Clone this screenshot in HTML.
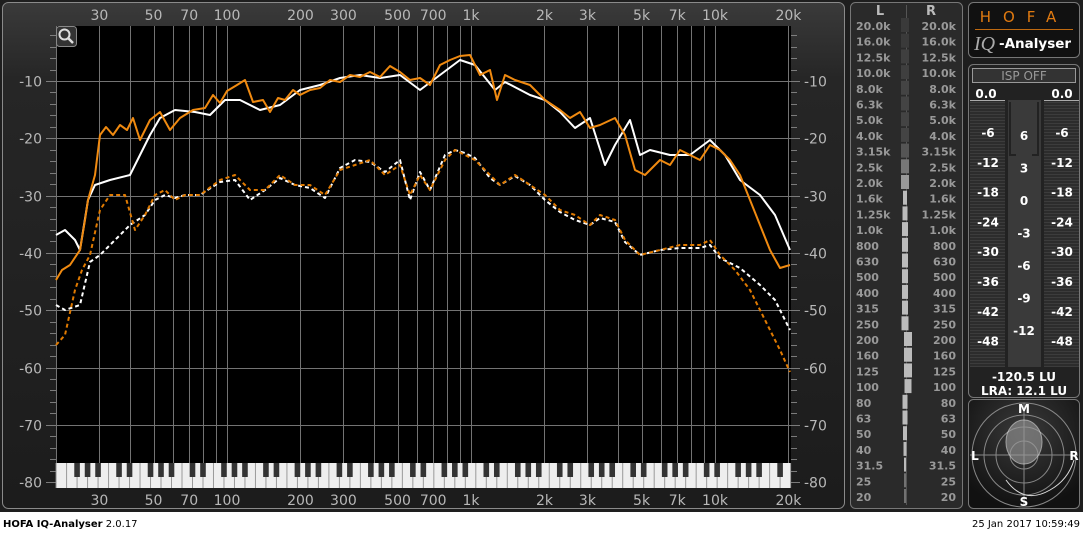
<!DOCTYPE html>
<html><head><meta charset="utf-8"><style>
body{margin:0;width:1083px;height:533px;background:#fff;overflow:hidden;font-family:"DejaVu Sans","Liberation Sans",sans-serif}
svg{position:absolute;left:0;top:0}
</style></head><body>
<svg id="s" width="1083" height="533" xmlns="http://www.w3.org/2000/svg" font-family="DejaVu Sans, Liberation Sans, sans-serif">
<defs>
<linearGradient id="bg" x1="0" y1="0" x2="0" y2="1"><stop offset="0" stop-color="#3a3a3a"/><stop offset="0.15" stop-color="#262626"/><stop offset="1" stop-color="#1c1c1c"/></linearGradient>
<pattern id="str" width="4" height="3" patternUnits="userSpaceOnUse"><rect width="4" height="3" fill="#2c2c2c"/><rect width="4" height="1" fill="#3c3c3c"/></pattern>
<radialGradient id="gn" cx="0.5" cy="0.3" r="0.7"><stop offset="0" stop-color="#3a3a3a"/><stop offset="1" stop-color="#111"/></radialGradient>
</defs>
<rect x="0" y="0" width="1083" height="512" fill="#1e1e1e"/>
<rect x="2.5" y="2.5" width="842" height="506" rx="6" fill="url(#bg)" stroke="#8a8a8a"/>
<rect x="56" y="26" width="735" height="462" fill="#000"/>
<g id="grid" stroke="#9a9a9a" stroke-width="1" opacity="0.75"></g>
<g id="lbl" fill="#b8b8b8" font-size="14"></g>
<g id="keys"></g>
<g fill="none" stroke-width="2" stroke-linejoin="round">
<polyline id="ws" stroke="#fff"/>
<polyline id="os" stroke="#f08a10"/>
<polyline id="wd" stroke="#fff" stroke-dasharray="4 3"/>
<polyline id="od" stroke="#e07a00" stroke-dasharray="4 3"/>
</g>
<rect x="56.5" y="26.5" width="20" height="20" rx="3" fill="#333" stroke="#888"/>
<circle cx="64.5" cy="34.5" r="5" fill="none" stroke="#ddd" stroke-width="2"/>
<line x1="68" y1="38" x2="73" y2="43" stroke="#ddd" stroke-width="2.5"/>
<rect x="850.5" y="2.5" width="112" height="506" rx="5" fill="#2a2a2a" stroke="#777"/>
<line x1="906.5" y1="5" x2="906.5" y2="505" stroke="#555"/>
<text x="880" y="15" fill="#bbb" font-size="13" font-weight="bold" text-anchor="middle">L</text>
<text x="931" y="15" fill="#bbb" font-size="13" font-weight="bold" text-anchor="middle">R</text>
<g id="bands" fill="#999" font-size="11" font-weight="bold"></g>
<rect x="968.5" y="2.5" width="111" height="55" rx="5" fill="#111" stroke="#777"/>
<text x="1024" y="22" fill="#e07a10" font-size="15" text-anchor="middle" letter-spacing="12">HOFA</text>
<line x1="975" y1="29.5" x2="1073" y2="29.5" stroke="#c06a10"/>
<text x="974" y="50" fill="#aaa" font-size="20" font-style="italic" font-family="Liberation Serif,serif">IQ</text>
<text x="999" y="48" fill="#fff" font-size="13.5" font-weight="bold">-Analyser</text>
<rect x="968.5" y="64.5" width="111" height="333" rx="5" fill="#222" stroke="#777"/>
<rect x="972.5" y="68.5" width="103" height="14" fill="#333" stroke="#999"/>
<text x="1024" y="80" fill="#999" font-size="12" text-anchor="middle">ISP OFF</text>
<text x="986" y="98" fill="#fff" font-size="12" font-weight="bold" text-anchor="middle">0.0</text>
<text x="1062" y="98" fill="#fff" font-size="12" font-weight="bold" text-anchor="middle">0.0</text>
<rect x="970" y="100" width="35" height="267" fill="url(#str)"/>
<rect x="1044" y="100" width="35" height="267" fill="url(#str)"/>
<rect x="970" y="100" width="35" height="1" fill="#aaa"/><rect x="1044" y="100" width="35" height="1" fill="#aaa"/>
<rect x="1008" y="100" width="33" height="267" fill="#3a3a3a"/>
<path d="M1010 102 V155 H1016 M1038 102 V155 H1032" stroke="#222" stroke-width="2" fill="none"/>
<g id="msc" fill="#fff" font-size="12" font-weight="bold" text-anchor="middle"></g>
<text x="1024" y="381" fill="#fff" font-size="12" font-weight="bold" text-anchor="middle">-120.5 LU</text>
<text x="1024" y="395" fill="#fff" font-size="12" font-weight="bold" text-anchor="middle">LRA: 12.1 LU</text>
<rect x="968.5" y="399.5" width="111" height="109" rx="5" fill="url(#gn)" stroke="#777"/>
<g fill="none" stroke="#888">
<circle cx="1024" cy="455" r="52"/><circle cx="1024" cy="455" r="40"/><circle cx="1024" cy="455" r="28"/><circle cx="1024" cy="455" r="14"/>
<line x1="970" y1="455" x2="1078" y2="455"/><line x1="1024" y1="403" x2="1024" y2="506"/>
</g>
<ellipse cx="1024" cy="442" rx="18" ry="22" fill="#999" opacity="0.6" stroke="#eee"/>
<path d="M1006 480 Q1024 505 1050 490 Q1068 480 1074 460" fill="none" stroke="#ddd"/>
<text x="1024" y="413" fill="#fff" font-size="12" font-weight="bold" text-anchor="middle">M</text>
<text x="1024" y="506" fill="#fff" font-size="12" font-weight="bold" text-anchor="middle">S</text>
<text x="975" y="460" fill="#fff" font-size="12" font-weight="bold" text-anchor="middle">L</text>
<text x="1074" y="460" fill="#fff" font-size="12" font-weight="bold" text-anchor="middle">R</text>
<text x="3" y="527" fill="#000" font-size="10"><tspan font-weight="bold">HOFA IQ-Analyser</tspan> 2.0.17</text>
<text x="1080" y="527" fill="#000" font-size="10" text-anchor="end">25 Jan 2017 10:59:49</text>
</svg>
<script>
var NS="http://www.w3.org/2000/svg";
function el(p,t,a,txt){var e=document.createElementNS(NS,t);for(var k in a)e.setAttribute(k,a[k]);if(txt!=null)e.textContent=txt;document.getElementById(p).appendChild(e);return e;}
function X(f){return 227+244*Math.log10(f/100);}
function Y(d){return 23.7-5.73*d;}
var fs=[20,30,40,50,60,70,80,90,100,200,300,400,500,600,700,800,900,1000,2000,3000,4000,5000,6000,7000,8000,9000,10000,20000];
fs.forEach(function(f){var x=Math.round(X(f))+0.5;el("grid","line",{x1:x,y1:26,x2:x,y2:463});});
for(var d=-10;d>=-80;d-=10){var y=Math.round(Y(d))+0.5;el("grid","line",{x1:46,y1:y,x2:800,y2:y});
el("lbl","text",{x:42,y:y+5,"text-anchor":"end"},String(d));el("lbl","text",{x:804,y:y+5},String(d));}
for(var d=-2;d>-80;d-=2){if(d%10==0)continue;var y=Math.round(Y(d))+0.5;el("grid","line",{x1:50,y1:y,x2:56,y2:y});el("grid","line",{x1:791,y1:y,x2:797,y2:y});}
var lb={30:"30",50:"50",70:"70",100:"100",200:"200",300:"300",500:"500",700:"700",1000:"1k",2000:"2k",3000:"3k",5000:"5k",7000:"7k",10000:"10k",20000:"20k"};
for(var f in lb){var x=X(+f);el("lbl","text",{x:x,y:20,"text-anchor":"middle"},lb[f]);el("lbl","text",{x:x,y:505,"text-anchor":"middle"},lb[f]);}
el("keys","rect",{x:56,y:463,width:735,height:25,fill:"#eee"});
var oct=244*Math.log10(2),ww=oct/7;
var cx=X(16.35);
for(var i=0;i<80;i++){var x=cx+i*ww;if(x>56&&x<791)el("keys","line",{x1:x,y1:463,x2:x,y2:488,stroke:"#999"});}
for(var o=0;o<12;o++){var b=cx+o*oct;[1,2,4,5,6].forEach(function(k){var x=b+k*ww-2.8;if(x>56&&x<786)el("keys","rect",{x:x,y:463,width:5.6,height:14,fill:"#333"});});}
function pl(id,s){document.getElementById(id).setAttribute("points",s);}
pl("os","56,280 62,270 70,265 80,250 85,220 88,200 95,175 100,135 106,127 113,135 120,125 127,130 133,118 140,140 150,120 160,112 170,130 180,118 193,110 205,108 213,95 220,103 227,91 237,85 245,80 253,102 263,100 270,112 278,98 285,100 293,90 300,95 310,90 320,88 330,80 340,82 350,75 360,77 370,72 380,77 390,66 400,72 410,80 420,78 430,85 440,65 450,60 460,56 470,55 480,75 490,70 497,100 505,75 515,80 530,85 545,100 560,110 570,118 580,112 590,128 600,125 615,118 625,135 635,170 645,175 660,160 670,165 680,150 690,155 700,160 710,145 720,150 730,160 740,175 750,200 760,225 770,250 780,268 790,265");
pl("ws","56,235 65,230 75,240 80,250 88,200 95,185 110,180 130,175 140,155 150,135 160,118 175,110 195,112 210,115 225,100 240,100 260,110 280,105 300,90 320,85 340,78 360,75 380,78 400,75 420,90 440,75 460,60 475,65 495,90 505,82 530,95 545,100 560,112 575,128 590,118 605,165 615,145 630,120 640,155 650,150 670,155 690,155 710,140 725,155 740,180 760,195 775,215 790,250");
pl("od","56,345 65,335 75,290 82,270 90,255 100,210 110,195 125,195 135,230 145,215 155,195 165,190 175,200 185,195 200,195 220,180 235,175 250,190 265,190 280,175 295,185 310,185 325,195 340,170 355,165 370,160 385,175 400,165 410,195 420,175 430,190 445,160 455,150 465,155 475,160 490,175 500,185 515,175 530,185 545,195 560,210 575,215 590,225 600,215 615,220 625,240 640,255 660,250 680,245 700,245 710,240 720,255 735,270 750,290 765,320 780,350 790,372");
pl("wd","56,305 65,310 80,305 90,262 100,255 115,240 130,225 145,215 155,200 165,195 175,198 185,195 200,195 220,182 235,180 250,200 265,190 280,178 295,185 310,188 325,198 340,168 355,160 370,162 385,172 400,160 410,200 420,172 430,190 445,155 455,150 465,153 475,158 490,178 500,185 515,176 530,185 545,200 560,212 575,220 590,225 600,218 615,222 625,242 640,255 660,250 680,248 700,248 710,245 720,258 740,268 760,285 775,300 790,330");
var bn=["20.0k","16.0k","12.5k","10.0k","8.0k","6.3k","5.0k","4.0k","3.15k","2.5k","2.0k","1.6k","1.25k","1.0k","800","630","500","400","315","250","200","160","125","100","80","63","50","40","31.5","25","20"];
var bw=[0,0,0,0,0,0,0,0,0,0,0,4,5,6,6,6,6,6,6,7,8,8,8,7,5,5,4,3,2,1,1];
var bc=["#3a3a3a","#3a3a3a","#3f3f3f","#3f3f3f","#444","#444","#444","#444","#555","#777","#999"];
bn.forEach(function(t,i){var y=30+i*15.7;el("bands","text",{x:856,y:y},t);el("bands","text",{x:956,y:y,"text-anchor":"end"},t);
var w=i<11?8:bw[i],c=i<11?bc[i]:"#bbb";if(w>0)el("bands","rect",{x:905-w/2+(i>=20&&i<24?3:0),y:y-12,width:w,height:14,fill:c});});
[-6,-12,-18,-24,-30,-36,-42,-48].forEach(function(v,i){var y=137+i*29.8;el("msc","text",{x:988,y:y},String(v));el("msc","text",{x:1062,y:y},String(v));});
[6,3,0,-3,-6,-9,-12].forEach(function(v,i){el("msc","text",{x:1024,y:140+i*32.5},String(v));});
</script>
</body></html>
